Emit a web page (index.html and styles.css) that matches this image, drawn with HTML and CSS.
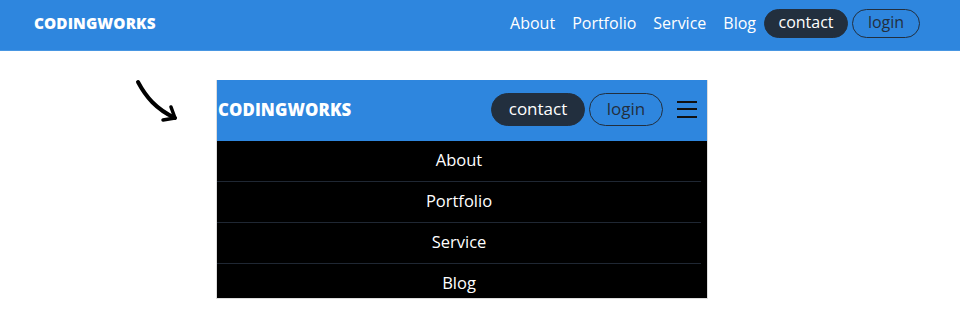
FILE: index.html
```html
<!DOCTYPE html>
<html lang="en">

<head>
  <meta charset="UTF-8" />
  <meta name="viewport" content="width=device-width, initial-scale=1.0" />
  <title>codingworks navbar</title>
  <link rel="stylesheet" href="styles.css">
</head>

<body>
  <header class="topbar">
    <div class="logo">CODINGWORKS</div>
    <nav class="menu">
      <a href="#">About</a>
      <a href="#">Portfolio</a>
      <a href="#">Service</a>
      <a href="#">Blog</a>
    </nav>
    <div class="btns">
      <a class="btn contact" href="#">contact</a>
      <a class="btn login" href="#">login</a>
    </div>
  </header>

  <section class="demo">
    <svg class="arrow" width="50" height="50" viewBox="0 0 50 50">
      <path d="M4 3 C 12 18, 22 30, 41 39" fill="none" stroke="#000" stroke-width="4" stroke-linecap="round" />
      <path d="M29 41 L41 39 L37 28" fill="none" stroke="#000" stroke-width="3.5" stroke-linecap="round" stroke-linejoin="round" />
    </svg>

    <div class="mobile">
      <div class="mobile-bar">
        <div class="logo big">CODINGWORKS</div>
        <div class="btns">
          <a class="btn contact big" href="#">contact</a>
          <a class="btn login big" href="#">login</a>
        </div>
        <div class="burger">
          <span></span>
          <span></span>
          <span></span>
        </div>
      </div>
      <ul class="mobile-menu">
        <li><a href="#">About</a></li>
        <li><a href="#">Portfolio</a></li>
        <li><a href="#">Service</a></li>
        <li><a href="#">Blog</a></li>
      </ul>
    </div>
  </section>
</body>

</html>
```

FILE: styles.css
```css
* {
  margin: 0;
  padding: 0;
  box-sizing: border-box;
}

body {
  font-family: "Open Sans", "Noto Sans", sans-serif;
  background: #fff;
}

a {
  text-decoration: none;
  color: inherit;
}

.topbar {
  display: flex;
  align-items: center;
  height: 51px;
  padding: 0 40px 4px 34px;
  background: #2e86de;
  border-bottom: 1px solid #4896e2;
}

.logo {
  color: #fff;
  font-weight: 800;
  font-size: 15.3px;
  letter-spacing: 0.1px;
}

.menu {
  margin-left: auto;
  display: flex;
  gap: 17px;
  font-size: 16px;
  color: #fff;
}

.btns {
  display: flex;
  align-items: center;
  gap: 4px;
  margin-left: 8px;
}

.btn {
  display: inline-flex;
  align-items: center;
  justify-content: center;
  height: 29px;
  padding: 0 0 2px;
  border-radius: 15px;
  font-size: 16px;
  border: 1px solid #222f3e;
}

.contact {
  background: #222f3e;
  color: #fff;
  width: 84px;
}

.login {
  color: #222f3e;
  width: 68px;
}

/* mobile preview */
.demo {
  display: flex;
  align-items: flex-start;
  padding: 29px 0 0 134px;
}

.arrow {
  margin-right: 32px;
  margin-top: -1px;
}

.mobile {
  width: 492px;
  height: 219px;
  overflow: hidden;
  border: 1px solid #ddd;
  border-top: 0;
}

.mobile-bar {
  display: flex;
  align-items: center;
  height: 61px;
  padding: 0 10px 3px 1px;
  background: #2e86de;
}

.logo.big {
  font-size: 16.8px;
  margin-right: auto;
}

.btn.big {
  height: 33px;
  border-radius: 17px;
  font-size: 17px;
}

.contact.big {
  width: 94px;
}

.login.big {
  width: 74px;
}

.burger {
  display: flex;
  flex-direction: column;
  gap: 5.5px;
  width: 20px;
  margin-left: 14px;
}

.burger span {
  display: block;
  height: 2px;
  background: #111;
}

.mobile-menu {
  list-style: none;
  background: #000;
  height: 158px;
}

.mobile-menu li {
  height: 41px;
  display: flex;
  align-items: center;
  justify-content: center;
  padding-bottom: 4px;
  margin-right: 6px;
  border-bottom: 1px solid #1f2733;
  color: #fff;
  font-size: 16.5px;
}
```
